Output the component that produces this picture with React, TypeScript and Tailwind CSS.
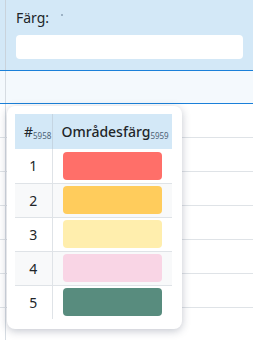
import React from 'react';

const palette = [
  { id: 1, color: '#ff6f69' },
  { id: 2, color: '#ffcc5c' },
  { id: 3, color: '#ffeead' },
  { id: 4, color: '#f9d5e5' },
  { id: 5, color: '#588c7e' },
];

export default function App() {
  return (
    <div
      className="relative w-[253px] h-[340px] overflow-hidden bg-white text-[#212529]"
      style={{ fontFamily: '"Noto Sans", "Open Sans", sans-serif' }}
    >
      {/* Filter header */}
      <div className="flex h-[70px] bg-[#d3e8f7]">
        <div className="w-[6px] border-r border-[#c9d3dc]" />
        <div className="flex-1 pl-[10px] pr-[10px] pt-[9px]">
          <div className="flex items-center gap-[12px] text-[14px] leading-[18px]">
            <span>Färg:</span>
            <span className="w-[2px] h-[2px] rounded-full bg-[#8aa0b4] -mt-[6px]" />
          </div>
          <div className="mt-[8px] h-[24px] rounded-[4px] bg-white" />
        </div>
      </div>

      {/* Selected row */}
      <div className="flex h-[34px] border-y border-[#1a80d9] bg-[#f4f9fd]">
        <div className="w-[6px] border-r border-[#d6dce2]" />
        <div className="flex-1" />
      </div>

      {/* Body rows */}
      {[0, 1, 2, 3, 4, 5, 6].map((i) => (
        <div key={i} className="flex h-[34px] border-b border-[#dfe3e7]">
          <div className="w-[6px] border-r border-[#d6dce2]" />
          <div className="flex-1" />
        </div>
      ))}

      {/* Colour picker popover */}
      <div className="absolute left-[7px] top-[106px] w-[175px] rounded-[8px] bg-white pt-[8px] pb-[10px] pl-[8px] pr-[10px] shadow-[0_2px_8px_rgba(40,50,80,0.28)]">
        <table className="table-fixed w-[157px] border-collapse text-[14px]">
          <colgroup>
            <col className="w-[37px]" />
            <col />
          </colgroup>
          <thead>
            <tr className="h-[35px] bg-[#d3e8f7]">
              <th className="border-r border-[#c5d5e2] pl-[9px] text-left font-normal whitespace-nowrap">
                #<span className="align-[-2px] text-[8px] text-[#4d6275]">5958</span>
              </th>
              <th className="pl-[9px] text-left text-[14px] font-medium whitespace-nowrap">
                Områdesfärg<span className="align-[-2px] text-[8px] font-normal text-[#4d6275]">5959</span>
              </th>
            </tr>
          </thead>
          <tbody>
            {palette.map((p, i) => (
              <tr
                key={p.id}
                className={`h-[34px] ${i < palette.length - 1 ? 'border-b border-[#dfe3e7]' : ''} ${i % 2 === 1 ? 'bg-[#f8f9fa]' : 'bg-white'}`}
              >
                <td className="border-r border-[#dfe3e7] text-center">{p.id}</td>
                <td className="pl-[10px] pr-[10px]">
                  <div className="h-[28px] rounded-[4px]" style={{ backgroundColor: p.color }} />
                </td>
              </tr>
            ))}
          </tbody>
        </table>
      </div>
    </div>
  );
}
